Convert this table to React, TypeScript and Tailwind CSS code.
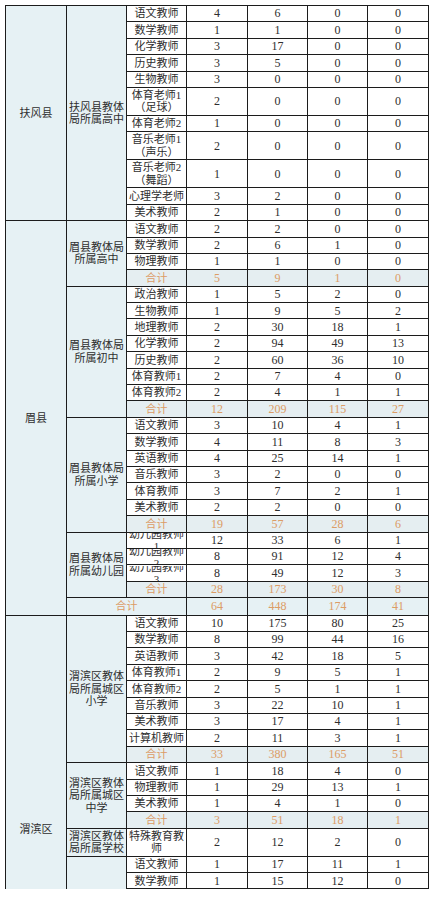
import React from 'react';

type Row = {
  subject: string[];
  vals: number[];
  total?: boolean;
  double?: boolean;
  clip?: boolean;
};

type Group = { school: string[]; rows: Row[] };

type County = {
  name: string;
  groups: Group[];
  total?: number[];
  nameTop?: boolean;
};

const r = (subject: string, vals: number[]): Row => ({ subject: [subject], vals });
const d = (a: string, b: string, vals: number[]): Row => ({ subject: [a, b], vals, double: true });
const t = (vals: number[]): Row => ({ subject: ['合计'], vals, total: true });
const k = (a: string, b: string, vals: number[]): Row => ({ subject: [a, b], vals, clip: true });

const counties: County[] = [
  {
    name: '扶风县',
    groups: [
      {
        school: ['扶风县教体', '局所属高中'],
        rows: [
          r('语文教师', [4, 6, 0, 0]),
          r('数学教师', [1, 1, 0, 0]),
          r('化学教师', [3, 17, 0, 0]),
          r('历史教师', [3, 5, 0, 0]),
          r('生物教师', [3, 0, 0, 0]),
          d('体育老师1', '（足球）', [2, 0, 0, 0]),
          r('体育老师2', [1, 0, 0, 0]),
          d('音乐老师1', '（声乐）', [2, 0, 0, 0]),
          d('音乐老师2', '（舞蹈）', [1, 0, 0, 0]),
          r('心理学老师', [3, 2, 0, 0]),
          r('美术教师', [2, 1, 0, 0]),
        ],
      },
    ],
  },
  {
    name: '眉县',
    groups: [
      {
        school: ['眉县教体局', '所属高中'],
        rows: [
          r('语文教师', [2, 2, 0, 0]),
          r('数学教师', [2, 6, 1, 0]),
          r('物理教师', [1, 1, 0, 0]),
          t([5, 9, 1, 0]),
        ],
      },
      {
        school: ['眉县教体局', '所属初中'],
        rows: [
          r('政治教师', [1, 5, 2, 0]),
          r('生物教师', [1, 9, 5, 2]),
          r('地理教师', [2, 30, 18, 1]),
          r('化学教师', [2, 94, 49, 13]),
          r('历史教师', [2, 60, 36, 10]),
          r('体育教师1', [2, 7, 4, 0]),
          r('体育教师2', [2, 4, 1, 1]),
          t([12, 209, 115, 27]),
        ],
      },
      {
        school: ['眉县教体局', '所属小学'],
        rows: [
          r('语文教师', [3, 10, 4, 1]),
          r('数学教师', [4, 11, 8, 3]),
          r('英语教师', [4, 25, 14, 1]),
          r('音乐教师', [3, 2, 0, 0]),
          r('体育教师', [3, 7, 2, 1]),
          r('美术教师', [2, 2, 0, 0]),
          t([19, 57, 28, 6]),
        ],
      },
      {
        school: ['眉县教体局', '所属幼儿园'],
        rows: [
          k('幼儿园教师', '1', [12, 33, 6, 1]),
          k('幼儿园教师', '2', [8, 91, 12, 4]),
          k('幼儿园教师', '3', [8, 49, 12, 3]),
          t([28, 173, 30, 8]),
        ],
      },
    ],
    total: [64, 448, 174, 41],
  },
  {
    name: '渭滨区',
    nameTop: true,
    groups: [
      {
        school: ['渭滨区教体', '局所属城区', '小学'],
        rows: [
          r('语文教师', [10, 175, 80, 25]),
          r('数学教师', [8, 99, 44, 16]),
          r('英语教师', [3, 42, 18, 5]),
          r('体育教师1', [2, 9, 5, 1]),
          r('体育教师2', [2, 5, 1, 1]),
          r('音乐教师', [3, 22, 10, 1]),
          r('美术教师', [3, 17, 4, 1]),
          r('计算机教师', [2, 11, 3, 1]),
          t([33, 380, 165, 51]),
        ],
      },
      {
        school: ['渭滨区教体', '局所属城区', '中学'],
        rows: [
          r('语文教师', [1, 18, 4, 0]),
          r('物理教师', [1, 29, 13, 1]),
          r('美术教师', [1, 4, 1, 0]),
          t([3, 51, 18, 1]),
        ],
      },
      {
        school: ['渭滨区教体', '局所属学校'],
        rows: [d('特殊教育教', '师', [2, 12, 2, 0])],
      },
      {
        school: [],
        rows: [
          r('语文教师', [1, 17, 11, 1]),
          r('数学教师', [1, 15, 12, 0]),
        ],
      },
    ],
  },
];

const cell = 'border border-[#1c1c1c] p-0 text-center align-middle';
const side = 'bg-[#e6f1f4] text-[#2e2e2e]';
const totalBg = 'bg-[#e5eef1] text-[#dc9c66]';

function Lines({ lines }: { lines: string[] }) {
  return (
    <div className="leading-[12.5px]">
      {lines.map((l, i) => (
        <div key={i}>{l}</div>
      ))}
    </div>
  );
}

export default function App() {
  const body: React.ReactNode[] = [];

  counties.forEach((c, ci) => {
    const countyRows =
      c.groups.reduce((n, g) => n + g.rows.length, 0) + (c.total ? 1 : 0);
    const isLast = ci === counties.length - 1;

    c.groups.forEach((g, gi) => {
      const lastGroup = isLast && gi === c.groups.length - 1;
      g.rows.forEach((row, ri) => {
        const first = gi === 0 && ri === 0;
        body.push(
          <tr
            key={`${ci}-${gi}-${ri}`}
            className={row.double ? 'h-[28px]' : 'h-[16.4px]'}
          >
            {first && (
              <td
                rowSpan={countyRows}
                className={`${cell} ${side} text-[11px] ${
                  c.nameTop ? 'align-top pt-[205px] border-b-0' : ''
                }`}
              >
                {c.name}
              </td>
            )}
            {ri === 0 && (
              <td
                rowSpan={g.rows.length}
                className={`${cell} ${side} text-[11px] ${lastGroup ? 'border-b-0' : ''}`}
              >
                <Lines lines={g.school} />
              </td>
            )}
            <td
              className={`${cell} text-[11px] ${
                row.total ? totalBg : 'bg-white text-[#2e2e2e]'
              }`}
            >
              {row.clip ? (
                <div className="flex h-[15px] flex-col items-center justify-center overflow-hidden">
                  <div className="shrink-0 leading-[12px]">
                    <div>{row.subject[0]}</div>
                    <div>{row.subject[1]}</div>
                  </div>
                </div>
              ) : (
                <Lines lines={row.subject} />
              )}
            </td>
            {row.vals.map((v, vi) => (
              <td
                key={vi}
                className={`${cell} text-[12px] leading-[12.5px] ${
                  row.total ? totalBg : 'bg-white text-[#2e2e2e]'
                }`}
              >
                {v}
              </td>
            ))}
          </tr>
        );
      });
    });

    if (c.total) {
      body.push(
        <tr key={`${ci}-total`} className="h-[16.4px]">
          <td colSpan={2} className={`${cell} ${side} text-[11px] text-[#dc9c66]`}>
            合计
          </td>
          {c.total.map((v, vi) => (
            <td
              key={vi}
              className={`${cell} text-[12px] leading-[12.5px] ${side} text-[#dc9c66]`}
            >
              {v}
            </td>
          ))}
        </tr>
      );
    }
  });

  return (
    <div
      className="h-[900px] w-[433px] overflow-hidden bg-white pl-[5px] pt-[5px]"
      style={{ fontFamily: '"Liberation Serif", "Noto Sans CJK SC", serif' }}
    >
      <table className="w-[423px] table-fixed border-collapse">
        <colgroup>
          <col className="w-[61px]" />
          <col className="w-[60px]" />
          <col className="w-[60px]" />
          <col className="w-[61px]" />
          <col className="w-[60px]" />
          <col className="w-[60px]" />
          <col className="w-[61px]" />
        </colgroup>
        <tbody>{body}</tbody>
      </table>
    </div>
  );
}
